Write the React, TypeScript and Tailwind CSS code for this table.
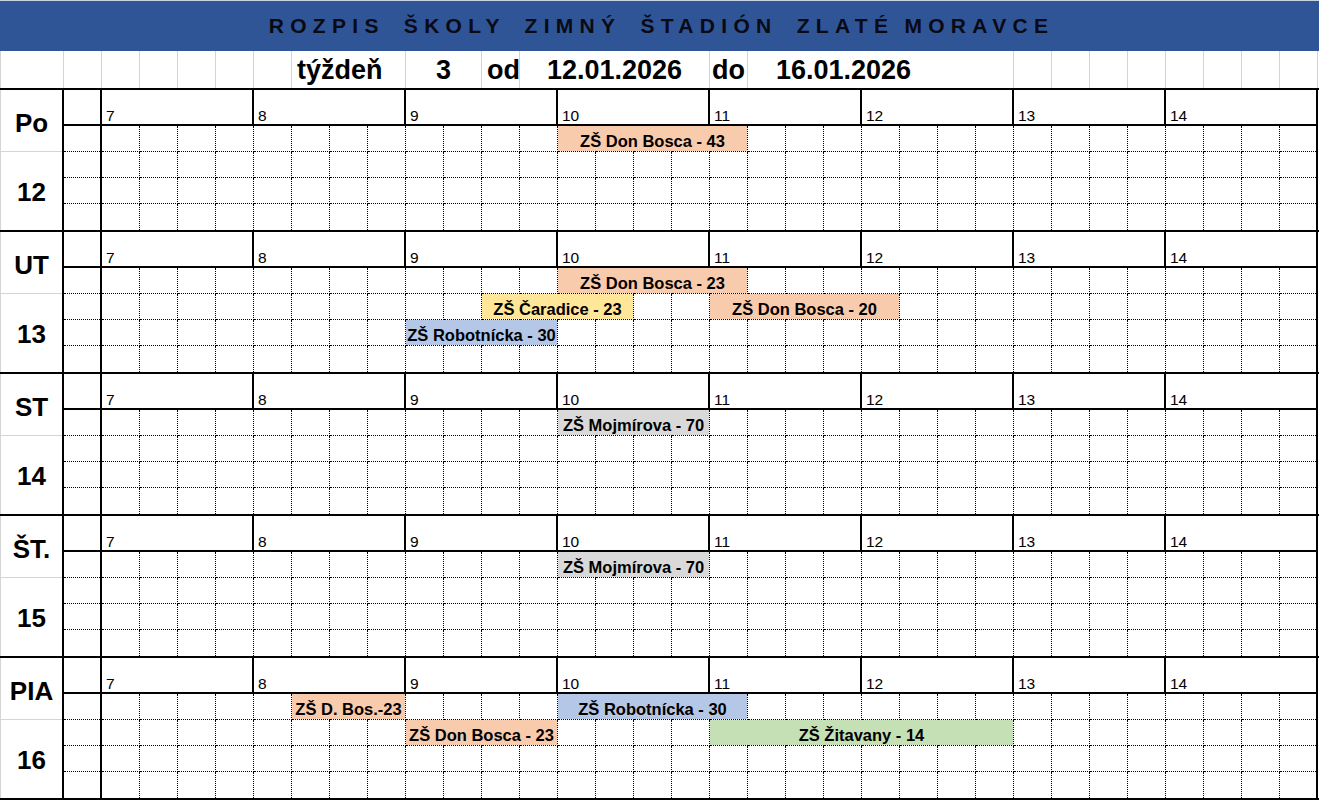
import React from "react";

type Ev = { c: string; t: string; bg: string };
type Day = { name: string; num: string; rows: Ev[][] };

const SAL = "bg-[#f8cbad]";
const YEL = "bg-[#ffe699]";
const BLU = "bg-[#b4c7e7]";
const GRY = "bg-[#d9d9d9]";
const GRN = "bg-[#c5e0b4]";

const days: Day[] = [
  {
    name: "Po",
    num: "12",
    rows: [[{ c: "col-[13/span_5]", t: "ZŠ Don Bosca - 43", bg: SAL }], [], [], []],
  },
  {
    name: "UT",
    num: "13",
    rows: [
      [{ c: "col-[13/span_5]", t: "ZŠ Don Bosca - 23", bg: SAL }],
      [
        { c: "col-[11/span_4]", t: "ZŠ Čaradice - 23", bg: YEL },
        { c: "col-[17/span_5]", t: "ZŠ Don Bosca - 20", bg: SAL },
      ],
      [{ c: "col-[9/span_4]", t: "ZŠ Robotnícka - 30", bg: BLU }],
      [],
    ],
  },
  {
    name: "ST",
    num: "14",
    rows: [[{ c: "col-[13/span_4]", t: "ZŠ Mojmírova - 70", bg: GRY }], [], [], []],
  },
  {
    name: "ŠT.",
    num: "15",
    rows: [[{ c: "col-[13/span_4]", t: "ZŠ Mojmírova - 70", bg: GRY }], [], [], []],
  },
  {
    name: "PIA",
    num: "16",
    rows: [
      [
        { c: "col-[6/span_3]", t: "ZŠ D. Bos.-23", bg: SAL },
        { c: "col-[13/span_5]", t: "ZŠ Robotnícka - 30", bg: BLU },
      ],
      [
        { c: "col-[9/span_4]", t: "ZŠ Don Bosca - 23", bg: SAL },
        { c: "col-[17/span_8]", t: "ZŠ Žitavany - 14", bg: GRN },
      ],
      [],
      [],
    ],
  },
];

const hours = [7, 8, 9, 10, 11, 12, 13, 14];
const cells = Array.from({ length: 32 }, (_, i) => i);

function SubRow({ events, last }: { events: Ev[]; last: boolean }) {
  return (
    <div className="grid h-[26px]">
      <div className="col-start-1 row-start-1 flex h-[26px]">
        {cells.map((i) => (
          <div
            key={i}
            className={
              (i === 31 ? "w-[36px] " : "w-[38px] border-r ") +
              (last ? "" : "border-b ") +
              "shrink-0 h-full border-dotted border-black"
            }
          />
        ))}
      </div>
      <div className="col-start-1 row-start-1 grid grid-cols-[repeat(31,38px)_36px] grid-rows-[26px]">
        {events.map((e, k) => (
          <div
            key={k}
            className={
              e.c +
              " row-start-1 mr-px mb-px flex items-center justify-center whitespace-nowrap font-bold text-[16.5px] leading-none pt-[5px] text-black " +
              e.bg
            }
          >
            {e.t}
          </div>
        ))}
      </div>
    </div>
  );
}

function DayBlock({ d, isLast }: { d: Day; isLast: boolean }) {
  return (
    <div
      className={
        "flex h-[142px] border-t-2 border-black " + (isLast ? "h-[144px] border-b-2" : "")
      }
    >
      <div className="w-[64px] shrink-0 flex flex-col border-r-2 border-black border-l border-l-[#d4d4d4]">
        <div className="h-[62px] shrink-0 border-b border-[#d4d4d4] flex items-center justify-center text-[26px] font-bold pt-[6px]">
          {d.name}
        </div>
        <div className="flex-1 flex items-center justify-center text-[26px] font-bold pt-[2px]">
          {d.num}
        </div>
      </div>
      <div className="w-[38px] shrink-0 flex flex-col border-r-2 border-black">
        <div className="h-[36px] shrink-0 border-b-2 border-black" />
        <div className="h-[26px] border-b border-dotted border-black" />
        <div className="h-[26px] border-b border-dotted border-black" />
        <div className="h-[26px] border-b border-dotted border-black" />
        <div className="h-[26px]" />
      </div>
      <div className="w-[1216px] shrink-0 flex flex-col border-r-2 border-black">
        <div className="h-[36px] shrink-0 flex border-b-2 border-black">
          {hours.map((h, i) => (
            <div
              key={h}
              className={
                (i === 7 ? "w-[150px] " : "w-[152px] border-r-2 border-black ") +
                "shrink-0 flex items-end pl-[4px] pb-0 text-[15.5px] leading-[17px]"
              }
            >
              {h}
            </div>
          ))}
        </div>
        {d.rows.map((r, i) => (
          <SubRow key={i} events={r} last={i === 3} />
        ))}
      </div>
    </div>
  );
}

const row2Widths = [
  "w-[64px] border-l",
  "w-[38px]",
  "w-[38px]",
  "w-[38px]",
  "w-[38px]",
  "w-[38px]",
  "w-[38px]",
];

export default function App() {
  return (
    <div className="w-[1319px] h-[800px] bg-white text-black font-['Liberation_Sans',Arial,sans-serif] overflow-hidden">
      <div className="h-[51px] bg-[#2f5597] border-t border-[#c9d3e6] flex items-center justify-center">
        <div className="text-[21px] font-bold tracking-[6.3px] text-[#0a0a14] whitespace-pre pl-[4px]">
          <span className="[word-spacing:7px]">ROZPIS ŠKOLY ZIMNÝ ŠTADIÓN ZLATÉ</span>
          <span className="[word-spacing:-2px]"> MORAVCE</span>
        </div>
      </div>
      <div className="h-[37px] flex text-[27px] font-bold leading-none">
        {row2Widths.map((w, i) => (
          <div key={i} className={w + " shrink-0 border-r border-[#d4d4d4]"} />
        ))}
        <div className="w-[114px] shrink-0 border-r border-[#d4d4d4] flex items-center pl-[5px] pt-[1px]">
          týždeň
        </div>
        <div className="w-[76px] shrink-0 border-r border-[#d4d4d4] flex items-center justify-center pt-[1px]">
          3
        </div>
        <div className="w-[38px] shrink-0 border-r border-[#d4d4d4] flex items-center pl-[5px] pt-[1px]">
          od
        </div>
        <div className="w-[190px] shrink-0 border-r border-[#d4d4d4] flex items-center justify-center pt-[1px]">
          12.01.2026
        </div>
        <div className="w-[38px] shrink-0 border-r border-[#d4d4d4] flex items-center pl-[2px] pt-[1px] overflow-visible whitespace-nowrap">
          do
        </div>
        <div className="w-[266px] shrink-0 border-r border-[#d4d4d4] flex items-center pl-[28px] pt-[1px]">
          16.01.2026
        </div>
        {cells.slice(0, 8).map((i) => (
          <div key={i} className="w-[38px] shrink-0 border-r border-[#d4d4d4]" />
        ))}
      </div>
      {days.map((d, i) => (
        <DayBlock key={d.name} d={d} isLast={i === days.length - 1} />
      ))}
    </div>
  );
}
